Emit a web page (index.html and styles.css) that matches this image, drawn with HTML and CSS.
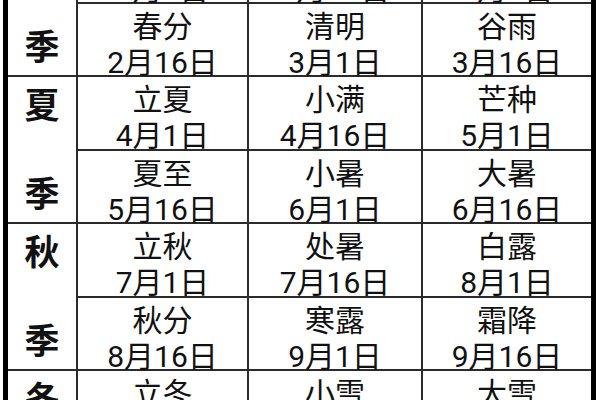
FILE: index.html
```html
<!DOCTYPE html>
<html lang="zh">
<head>
<meta charset="utf-8">
<link rel="stylesheet" href="styles.css">
</head>
<body>
<div class="table">
  <div class="season"><span>春</span><span>季</span></div>
  <div class="cell"><span>立春</span><span>1月1日</span></div>
  <div class="cell"><span>雨水</span><span>1月16日</span></div>
  <div class="cell"><span>惊蛰</span><span>2月1日</span></div>
  <div class="cell"><span>春分</span><span>2月16日</span></div>
  <div class="cell"><span>清明</span><span>3月1日</span></div>
  <div class="cell"><span>谷雨</span><span>3月16日</span></div>

  <div class="season"><span>夏</span><span>季</span></div>
  <div class="cell"><span>立夏</span><span>4月1日</span></div>
  <div class="cell"><span>小满</span><span>4月16日</span></div>
  <div class="cell"><span>芒种</span><span>5月1日</span></div>
  <div class="cell"><span>夏至</span><span>5月16日</span></div>
  <div class="cell"><span>小暑</span><span>6月1日</span></div>
  <div class="cell"><span>大暑</span><span>6月16日</span></div>

  <div class="season"><span>秋</span><span>季</span></div>
  <div class="cell"><span>立秋</span><span>7月1日</span></div>
  <div class="cell"><span>处暑</span><span>7月16日</span></div>
  <div class="cell"><span>白露</span><span>8月1日</span></div>
  <div class="cell"><span>秋分</span><span>8月16日</span></div>
  <div class="cell"><span>寒露</span><span>9月1日</span></div>
  <div class="cell"><span>霜降</span><span>9月16日</span></div>

  <div class="season"><span>冬</span><span>季</span></div>
  <div class="cell"><span>立冬</span><span>10月1日</span></div>
  <div class="cell"><span>小雪</span><span>10月16日</span></div>
  <div class="cell"><span>大雪</span><span>11月1日</span></div>
  <div class="cell"><span>冬至</span><span>11月16日</span></div>
  <div class="cell"><span>小寒</span><span>12月1日</span></div>
  <div class="cell"><span>大寒</span><span>12月16日</span></div>
</div>
</body>
</html>
```

FILE: styles.css
```css
html, body {
  margin: 0;
  padding: 0;
  background: #fff;
  height: 400px;
  overflow: hidden;
}

.table {
  margin-top: -69.4px;
  margin-left: 3px;
  width: 583px;
  border-left: 5px solid #000;
  border-right: 5px solid #000;
  display: grid;
  grid-template-columns: 68px 169px 172px 168px;
  grid-auto-rows: 71.4px;
  gap: 2px;
  background: #2b2b2b;
  font-family: Roboto, "Noto Sans CJK SC", sans-serif;
  color: #111;
}

.season {
  grid-row: span 2;
  background: #fff;
  display: flex;
  flex-direction: column;
  justify-content: space-between;
  align-items: center;
  padding: 10px 0 6px;
  font-size: 35px;
  line-height: 40px;
  font-weight: 700;
}

.cell {
  background: #fff;
  display: flex;
  flex-direction: column;
  align-items: center;
  padding-top: 5px;
  font-size: 30px;
  line-height: 36px;
  overflow: visible;
}
```
